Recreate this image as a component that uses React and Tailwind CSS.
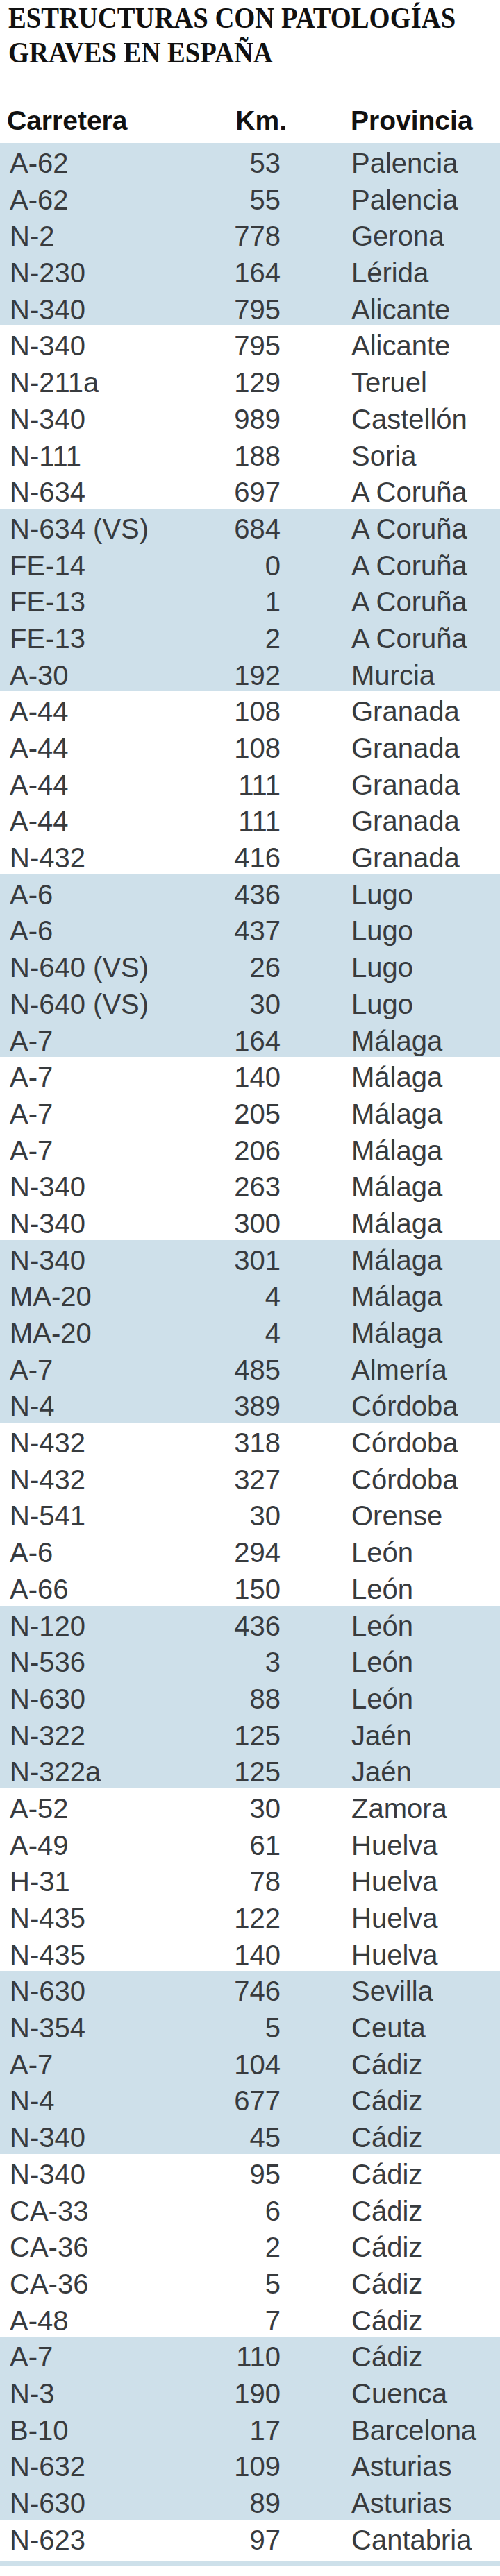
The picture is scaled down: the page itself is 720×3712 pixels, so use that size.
import React from "react";

const rows = [
  ["A-62", "53", "Palencia"],
  ["A-62", "55", "Palencia"],
  ["N-2", "778", "Gerona"],
  ["N-230", "164", "Lérida"],
  ["N-340", "795", "Alicante"],
  ["N-340", "795", "Alicante"],
  ["N-211a", "129", "Teruel"],
  ["N-340", "989", "Castellón"],
  ["N-111", "188", "Soria"],
  ["N-634", "697", "A Coruña"],
  ["N-634 (VS)", "684", "A Coruña"],
  ["FE-14", "0", "A Coruña"],
  ["FE-13", "1", "A Coruña"],
  ["FE-13", "2", "A Coruña"],
  ["A-30", "192", "Murcia"],
  ["A-44", "108", "Granada"],
  ["A-44", "108", "Granada"],
  ["A-44", "111", "Granada"],
  ["A-44", "111", "Granada"],
  ["N-432", "416", "Granada"],
  ["A-6", "436", "Lugo"],
  ["A-6", "437", "Lugo"],
  ["N-640 (VS)", "26", "Lugo"],
  ["N-640 (VS)", "30", "Lugo"],
  ["A-7", "164", "Málaga"],
  ["A-7", "140", "Málaga"],
  ["A-7", "205", "Málaga"],
  ["A-7", "206", "Málaga"],
  ["N-340", "263", "Málaga"],
  ["N-340", "300", "Málaga"],
  ["N-340", "301", "Málaga"],
  ["MA-20", "4", "Málaga"],
  ["MA-20", "4", "Málaga"],
  ["A-7", "485", "Almería"],
  ["N-4", "389", "Córdoba"],
  ["N-432", "318", "Córdoba"],
  ["N-432", "327", "Córdoba"],
  ["N-541", "30", "Orense"],
  ["A-6", "294", "León"],
  ["A-66", "150", "León"],
  ["N-120", "436", "León"],
  ["N-536", "3", "León"],
  ["N-630", "88", "León"],
  ["N-322", "125", "Jaén"],
  ["N-322a", "125", "Jaén"],
  ["A-52", "30", "Zamora"],
  ["A-49", "61", "Huelva"],
  ["H-31", "78", "Huelva"],
  ["N-435", "122", "Huelva"],
  ["N-435", "140", "Huelva"],
  ["N-630", "746", "Sevilla"],
  ["N-354", "5", "Ceuta"],
  ["A-7", "104", "Cádiz"],
  ["N-4", "677", "Cádiz"],
  ["N-340", "45", "Cádiz"],
  ["N-340", "95", "Cádiz"],
  ["CA-33", "6", "Cádiz"],
  ["CA-36", "2", "Cádiz"],
  ["CA-36", "5", "Cádiz"],
  ["A-48", "7", "Cádiz"],
  ["A-7", "110", "Cádiz"],
  ["N-3", "190", "Cuenca"],
  ["B-10", "17", "Barcelona"],
  ["N-632", "109", "Asturias"],
  ["N-630", "89", "Asturias"],
  ["N-623", "97", "Cantabria"],
];

const groups = [];
for (let i = 0; i < rows.length; i += 5) groups.push(rows.slice(i, i + 5));

function Row({ r }) {
  return (
    <div className="flex h-[52.7px] pl-[14px] leading-[58px] text-[40px] text-[#383b3e] whitespace-nowrap">
      <div className="w-[250px]">{r[0]}</div>
      <div className="w-[140px] text-right">{r[1]}</div>
      <div className="pl-[102px]">{r[2]}</div>
    </div>
  );
}

export default function App() {
  return (
    <div className="w-[720px] bg-white" style={{ fontFamily: '"Liberation Sans", Arial, sans-serif' }}>
      <div
        className="pl-[12px] pt-[1px] h-[100px] text-[42px] leading-[50px] font-bold text-[#111] whitespace-nowrap"
        style={{ fontFamily: '"Liberation Serif", "Times New Roman", serif' }}
      >
        <div className="inline-block origin-left scale-x-[0.92]">
          ESTRUCTURAS CON PATOLOGÍAS
          <br />
          GRAVES EN ESPAÑA
        </div>
      </div>
      <div className="mt-[52px] h-[54px] flex pl-[10px] text-[39px] leading-[44px] font-bold text-[#111] whitespace-nowrap">
        <div className="w-[254px]">Carretera</div>
        <div className="w-[149px] text-right">Km.</div>
        <div className="pl-[92px]">Provincia</div>
      </div>
      <div>
        {groups.map((g, gi) => (
          <div key={gi} className={gi % 2 === 0 ? "bg-[#cee0ea]" : "bg-white"}>
            {g.map((r, ri) => (
              <Row key={ri} r={r} />
            ))}
          </div>
        ))}
      </div>
      <div className="mt-[7px] h-[7px] bg-[#cee0ea]"></div>
      <div className="h-[13px]"></div>
    </div>
  );
}
